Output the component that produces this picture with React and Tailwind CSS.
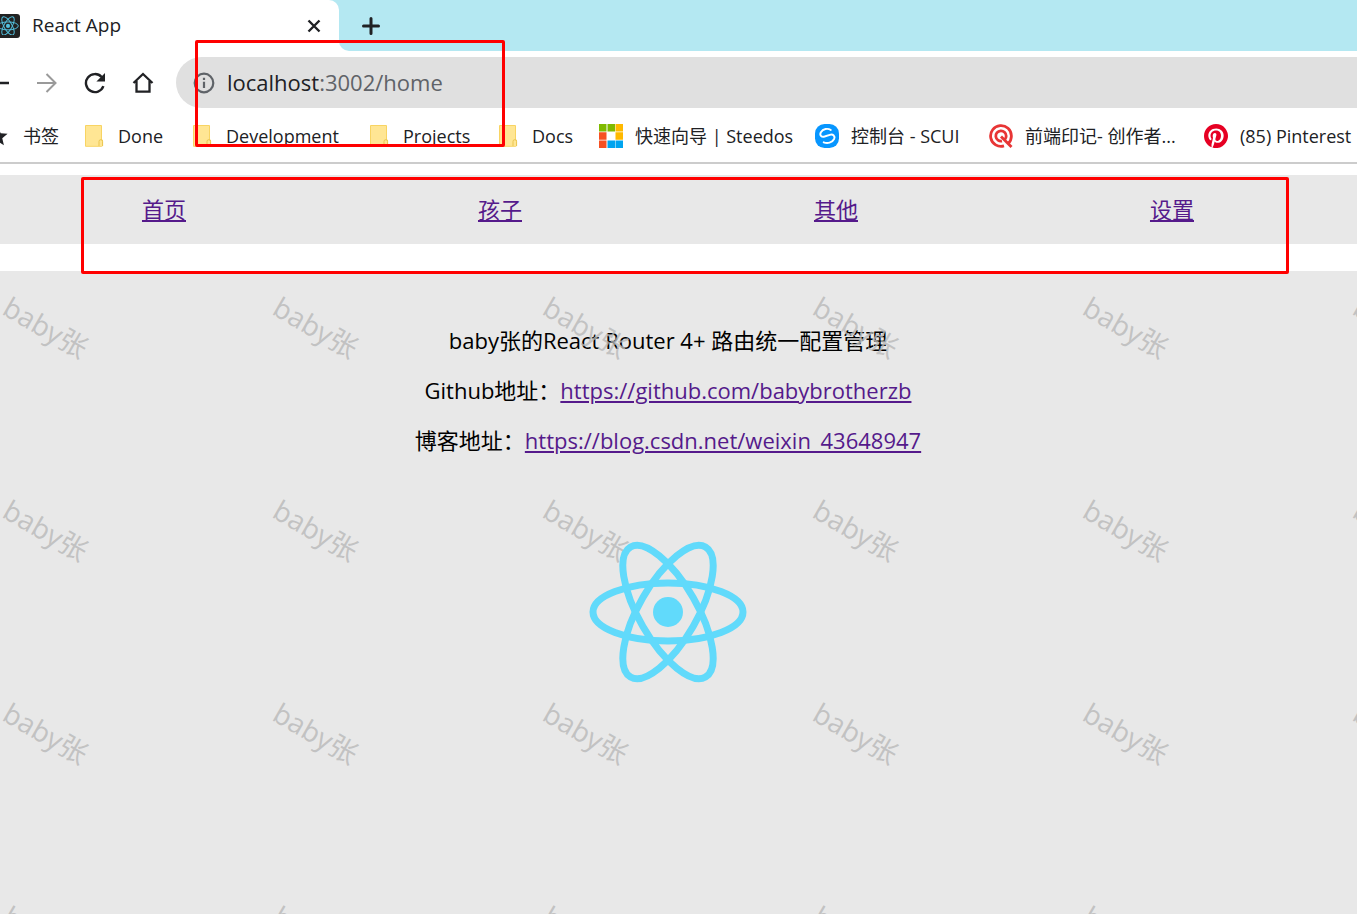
const WATERMARKS = Array.from({ length: 24 }, (_, i) => i);
const NAV = [
  ["首页", "#home"],
  ["孩子", "#child"],
  ["其他", "#other"],
  ["设置", "#setting"],
];

function Atom({ className, color = "#61dafb", strokeWidth = 7 }) {
  return (
    <svg viewBox="-80 -72 160 144" className={className} fill="none" stroke={color} strokeWidth={strokeWidth} aria-hidden="true">
      <ellipse rx="75" ry="29" />
      <ellipse rx="75" ry="29" transform="rotate(60)" />
      <ellipse rx="75" ry="29" transform="rotate(120)" />
      <circle r="15" fill={color} stroke="none" />
    </svg>
  );
}

function FolderIcon() {
  return (
    <svg viewBox="0 0 20 24" className="h-6 w-5 shrink-0" aria-hidden="true">
      <path d="M1.500 1.500h16v14.500h1v5.500a.8.800 0 0 1-.8.800H1.500z" fill="#ffe694" stroke="#f8d463" />
      <path d="M15 22v-4.500a1.800 1.800 0 0 1 3.600 0V22" fill="#ffe694" stroke="#eac54f" />
    </svg>
  );
}

function StarIcon() {
  return (
    <svg viewBox="0 0 24 24" className="-ml-3 size-5 shrink-0" aria-hidden="true">
      <path d="M12 1l3.200 7.800 8.300.600-6.400 5.400 2 8.200L12 18.500 4.900 23l2-8.200L.5 9.400l8.300-.6z" fill="#202124" />
    </svg>
  );
}

function SteedosIcon() {
  return (
    <svg viewBox="0 0 24 24" className="size-6 shrink-0" aria-hidden="true">
      <path d="M0 0h7.500v7.500H0zM8.500 0H16v7.500H8.500z" fill="#7fba00" />
      <path d="M16.500 0H24v7.500h-7.500zM16.500 8.300H24v7.500h-7.500z" fill="#ffb900" />
      <path d="M0 8.300h7.500v7.500H0zM0 16.500h7.500V24H0z" fill="#f65022" />
      <path d="M8.500 16.500H16V24H8.500zM16.500 16.500H24V24h-7.500z" fill="#00a4ef" />
    </svg>
  );
}

function ScuiIcon() {
  return (
    <svg viewBox="0 0 24 24" className="size-6 shrink-0" aria-hidden="true">
      <rect width="24" height="24" rx="9.500" fill="#0796ff" />
      <path d="M15.800 6C12.800 3.900 8 4.800 5.900 8.200c-1.700 3 .600 5.200 3.700 4.300l5.200-1.700c3.400-.900 5.600 1.300 4.300 4.200-1.900 3.700-6.700 4.900-10.400 3.300" fill="none" stroke="#fff" strokeWidth="1.900" strokeLinecap="round" />
    </svg>
  );
}

function QIcon() {
  return (
    <svg viewBox="0 0 24 24" className="size-6 shrink-0" fill="none" stroke="#e83535" strokeWidth="2.800" aria-hidden="true">
      <path d="M15 21.900A10.400 10.400 0 1 1 22.400 12c0 3.500-1.500 6-3.400 7.800" />
      <path d="M13 17.100A5.200 5.200 0 1 1 17.200 12c0 1.500-.5 2.600-1.400 3.500" />
      <path d="M12 12.500l10.500 10.500" />
    </svg>
  );
}

function PinterestIcon() {
  return (
    <svg viewBox="0 0 24 24" className="size-6 shrink-0" aria-hidden="true">
      <circle cx="12" cy="12" r="11.500" fill="#fff" />
      <path
        fill="#e60023"
        d="M12 0C5.373 0 0 5.373 0 12c0 5.084 3.163 9.426 7.627 11.174-.105-.949-.2-2.405.042-3.441.218-.937 1.407-5.965 1.407-5.965s-.359-.719-.359-1.782c0-1.668.967-2.914 2.171-2.914 1.023 0 1.518.769 1.518 1.690 0 1.029-.655 2.568-.994 3.995-.283 1.194.599 2.169 1.777 2.169 2.133 0 3.772-2.249 3.772-5.495 0-2.873-2.064-4.882-5.012-4.882-3.414 0-5.418 2.561-5.418 5.207 0 1.031.397 2.138.893 2.738a.36.36 0 0 1 .083.345c-.091.379-.293 1.194-.333 1.361-.053.218-.174.265-.402.159-1.499-.698-2.436-2.889-2.436-4.649 0-3.785 2.750-7.262 7.929-7.262 4.163 0 7.398 2.967 7.398 6.931 0 4.136-2.607 7.464-6.227 7.464-1.216 0-2.359-.631-2.750-1.378l-.748 2.853c-.271 1.043-1.002 2.350-1.492 3.146A12 12 0 1 0 12 0z"
      />
    </svg>
  );
}

function Bookmark({ icon, label, className }) {
  return (
    <a href="#bookmark" className={`flex shrink-0 items-center whitespace-nowrap ${className}`}>
      {icon}
      {label}
    </a>
  );
}

function Browser() {
  return (
    <header className="relative border-b-2 border-[#cccccc] bg-white font-['Open_Sans','Noto_Sans_CJK_SC',sans-serif] text-[#202124]">
      <div className="flex h-[51px] bg-white">
        <div className="flex w-[339px] shrink-0 bg-[#b4e8f2]">
          <div className="flex flex-1 items-center rounded-tr-[10px] bg-white pr-[17px]">
            <span className="-ml-1 flex size-6 items-center justify-center rounded-[3px] bg-[#222222]">
              <Atom className="w-[22px]" color="#53c1de" />
            </span>
            <span className="ml-3 flex-1 text-[19px]">React App</span>
            <button aria-label="Close tab" className="flex size-4 items-center justify-center">
              <svg viewBox="0 0 14 14" className="size-[14px]" stroke="#202124" strokeWidth="2.400"><path d="M1.500 1.500l11 11M12.500 1.500l-11 11" /></svg>
            </button>
          </div>
        </div>
        <div className="flex flex-1 items-center rounded-bl-[10px] bg-[#b4e8f2] pl-[23px]">
          <button aria-label="New tab">
            <svg viewBox="0 0 18 18" className="size-[18px]" stroke="#202124" strokeWidth="3" strokeLinecap="round"><path d="M9 1.500v15M1.500 9h15" /></svg>
          </button>
        </div>
      </div>

      <div className="mt-[6px] flex h-[51px] items-center">
        <button aria-label="Back" className="-ml-[11px]">
          <svg viewBox="0 0 20 20" className="size-5" fill="none" stroke="#202124" strokeWidth="2.400"><path d="M20 10H2M10 1l-9 9 9 9" /></svg>
        </button>
        <button aria-label="Forward" className="ml-[28px]">
          <svg viewBox="0 0 20 20" className="size-5" fill="none" stroke="#9a9a9a" strokeWidth="2"><path d="M0 10h18M9.500 1l9 9-9 9" /></svg>
        </button>
        <button aria-label="Reload" className="ml-[27px]">
          <svg viewBox="0 0 22 22" className="size-[22px]" fill="none" stroke="#202124" strokeWidth="2.400"><path d="M19.400 14.200A9 9 0 1 1 17.600 5" /><path d="M21 1v8.600h-8.600z" fill="#202124" stroke="none" /></svg>
        </button>
        <button aria-label="Home" className="ml-[26px]">
          <svg viewBox="0 0 22 22" className="size-[22px]" fill="none" stroke="#202124" strokeWidth="2.300"><path d="M1.500 11L11 2l9.500 9M4.500 9v10.700h13V9" /></svg>
        </button>
        <div className="ml-[22px] flex h-full flex-1 items-center rounded-l-full bg-[#e0e0e0] pl-[17px] text-[22px]">
          <svg viewBox="0 0 22 22" className="size-[22px] shrink-0" fill="none" stroke="#5f6368" strokeWidth="2.200"><circle cx="11" cy="11" r="9.300" /><path d="M11 9.800v6.200M11 5.800v2.200" /></svg>
          <span className="ml-3">localhost<span className="text-[#5f6368]">:3002/home</span></span>
        </div>
      </div>

      <nav aria-label="Bookmarks" className="flex h-[54px] items-center overflow-hidden pt-px text-lg">
        <Bookmark icon={<StarIcon />} label="书签" className="w-[84px] gap-[15px]" />
        <Bookmark icon={<FolderIcon />} label="Done" className="w-[108px] gap-[14px]" />
        <Bookmark icon={<FolderIcon />} label="Development" className="w-[177px] gap-[14px]" />
        <Bookmark icon={<FolderIcon />} label="Projects" className="w-[129px] gap-[14px]" />
        <Bookmark icon={<FolderIcon />} label="Docs" className="w-[101px] gap-[14px]" />
        <Bookmark icon={<SteedosIcon />} label="快速向导 | Steedos" className="w-[216px] gap-3" />
        <Bookmark icon={<ScuiIcon />} label="控制台 - SCUI" className="w-[174px] gap-3" />
        <Bookmark icon={<QIcon />} label="前端印记- 创作者..." className="w-[215px] gap-3" />
        <Bookmark icon={<PinterestIcon />} label="(85) Pinterest" className="gap-3" />
      </nav>
      <div className="pointer-events-none absolute top-[40px] left-[195px] h-[107px] w-[310px] rounded-[2px] border-3 border-[#ff0000]" />
    </header>
  );
}

export default function App() {
  return (
    <div className="flex min-h-screen flex-col overflow-hidden bg-white font-['Open_Sans','Noto_Sans_CJK_SC',sans-serif] text-[22px] text-black">
      <Browser />
      <div className="relative mt-[11px]">
        <nav className="bg-[#e8e8e8]">
          <ul className="mr-[17px] -ml-1 flex h-[69px] items-center justify-around">
            {NAV.map(([label, href]) => (
              <li key={href}>
                <a href={href} className="text-[#551a8b] underline decoration-2 underline-offset-2">{label}</a>
              </li>
            ))}
          </ul>
        </nav>
        <div className="pointer-events-none absolute top-[2px] right-[68px] left-[81px] z-10 h-[97px] rounded-[2px] border-3 border-[#ff0000]" />
      </div>

      <main className="relative mt-[27px] flex-1 overflow-hidden bg-[#e8e8e8]">
        <div className="mr-[17px] -ml-1 flex flex-col items-center gap-[18px] pt-[53px] leading-8">
          <p>baby张的React Router 4+ 路由统一配置管理</p>
          <p>
            Github地址：
            <a href="https://github.com/babybrotherzb" className="text-[#551a8b] underline decoration-2 underline-offset-2">https://github.com/babybrotherzb</a>
          </p>
          <p>
            博客地址：
            <a href="https://blog.csdn.net/weixin_43648947" className="text-[#551a8b] underline decoration-2 underline-offset-2">https://blog.csdn.net/weixin_43648947</a>
          </p>
          <Atom className="relative z-10 mt-[66px] w-[160px]" />
        </div>
        <div aria-hidden="true" className="pointer-events-none absolute top-0 left-0 grid auto-rows-[203px] grid-cols-[repeat(6,270px)] text-[28px] text-[#b8b8b8]/80">
          {WATERMARKS.map((i) => (
            <div key={i} className="pt-[35px]">
              <span className="inline-block rotate-30 leading-10">baby张</span>
            </div>
          ))}
        </div>
      </main>
    </div>
  );
}
